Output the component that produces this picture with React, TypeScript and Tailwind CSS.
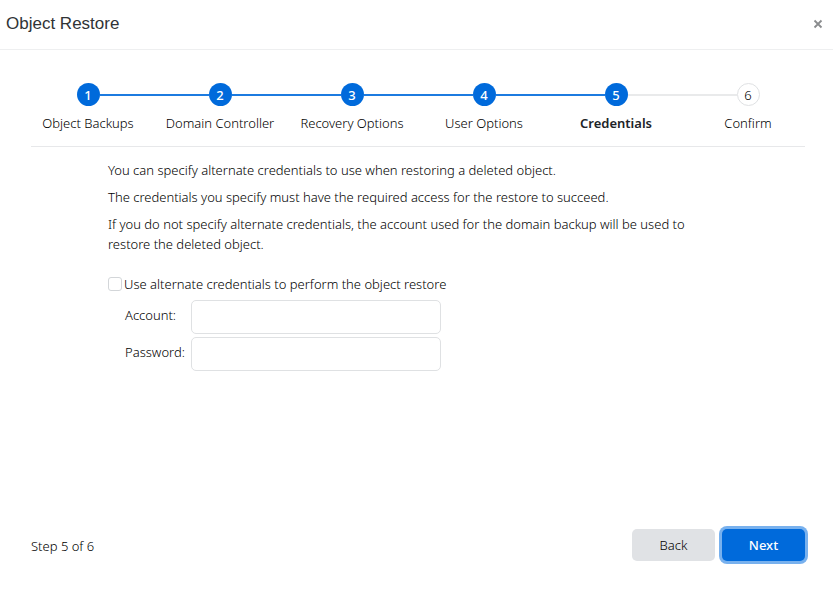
import { useState } from "react";
import { clsx } from "clsx";

const steps = [
  "Object Backups",
  "Domain Controller",
  "Recovery Options",
  "User Options",
  "Credentials",
  "Confirm",
];

const CURRENT_STEP = 5;

interface StepItemProps {
  label: string;
  number: number;
}

const StepItem = ({ label, number }: StepItemProps) => {
  const isReached = number <= CURRENT_STEP;
  const isCurrent = number === CURRENT_STEP;
  const lineColor = isReached ? "bg-[#1c7be0]" : "bg-[#e9eaeb]";
  const nextLineColor = number < CURRENT_STEP ? "bg-[#1c7be0]" : "bg-[#e9eaeb]";

  return (
    <li
      className="flex flex-1 flex-col items-center gap-[7px]"
      aria-current={isCurrent ? "step" : undefined}
    >
      <div className="flex w-full items-center">
        <span className={clsx("h-0.5 flex-1", number > 1 && lineColor)} />
        <span
          className={clsx(
            "flex size-[23px] items-center justify-center rounded-full",
            isReached
              ? "bg-[#006adb] font-medium text-white"
              : "border border-[#dfe1e3] bg-white",
          )}
        >
          {number}
        </span>
        <span
          className={clsx("h-0.5 flex-1", number < steps.length && nextLineColor)}
        />
      </div>
      <span
        className={clsx(
          "whitespace-nowrap",
          isCurrent && "font-semibold text-[#202327]",
        )}
      >
        {label}
      </span>
    </li>
  );
};

interface TextFieldProps {
  id: string;
  label: string;
  type: string;
}

const TextField = ({ id, label, type }: TextFieldProps) => (
  <div className="flex">
    <label htmlFor={id} className="w-[66px] pt-[5px]">
      {label}
    </label>
    <input
      id={id}
      type={type}
      className="h-[34px] w-[250px] rounded-[5px] border border-[#dfe1e3] bg-white px-2 outline-none"
    />
  </div>
);

const App = () => {
  const [useAlternate, setUseAlternate] = useState(false);

  return (
    <div className="flex min-h-screen flex-col bg-white font-['Noto_Sans',sans-serif] text-[13px] leading-5 font-light text-black">
      <header className="flex h-[50px] items-center justify-between border-b border-[#eeeff0] pr-2 pb-0.5 pl-1.5">
        <h1 className="font-['Liberation_Sans',sans-serif] text-[17px] font-normal text-[#303336]">
          Object Restore
        </h1>
        <button type="button" aria-label="Close" className="p-0.5 text-[#8a8c8e]">
          <svg
            viewBox="0 0 10 10"
            className="size-2.5"
            stroke="currentColor"
            strokeWidth="1.8"
          >
            <path d="M1.5 1.5l7 7M8.5 1.5l-7 7" />
          </svg>
        </button>
      </header>

      <main className="flex-1 pr-7 pl-[31px]">
        <div className="border-b border-[#e7e8ea] pt-[33px] pb-[13px]">
          <ol className="-mx-[9px] flex">
            {steps.map((label, index) => (
              <StepItem key={label} label={label} number={index + 1} />
            ))}
          </ol>
        </div>

        <div className="mx-[77px] pt-[13px]">
          <div className="flex max-w-[600px] flex-col gap-[7px]">
            <p>
              You can specify alternate credentials to use when restoring a
              deleted object.
            </p>
            <p>
              The credentials you specify must have the required access for the
              restore to succeed.
            </p>
            <p>
              If you do not specify alternate credentials, the account used for
              the domain backup will be used to restore the deleted object.
            </p>
          </div>

          <form className="pt-5">
            <label className="flex items-center gap-0.5">
              <input
                type="checkbox"
                checked={useAlternate}
                onChange={(e) => setUseAlternate(e.target.checked)}
                className="size-3.5 appearance-none rounded-[3px] border border-[#d3d6d9] bg-white checked:bg-[#006adb]"
              />
              Use alternate credentials to perform the object restore
            </label>
            <div className="flex flex-col gap-[3px] pt-1.5 pl-[17px]">
              <TextField id="account" label="Account:" type="text" />
              <TextField id="password" label="Password:" type="password" />
            </div>
          </form>
        </div>
      </main>

      <footer className="flex items-end justify-between pr-7 pb-[30px] pl-[31px]">
        <span className="pb-[5px]">
          Step {CURRENT_STEP} of {steps.length}
        </span>
        <div className="flex gap-[7px]">
          <button
            type="button"
            className="h-8 w-[83px] rounded-[5px] bg-[#e0e2e5]"
          >
            Back
          </button>
          <button
            type="button"
            className="h-8 w-[83px] rounded-[5px] bg-[#006adb] font-medium text-white ring-3 ring-[#78b1ee]"
          >
            Next
          </button>
        </div>
      </footer>
    </div>
  );
};

export default App;
